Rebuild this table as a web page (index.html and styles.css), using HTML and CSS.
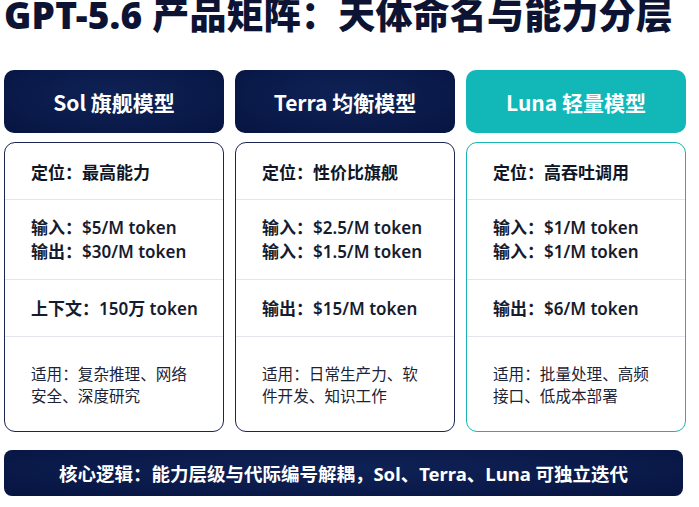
FILE: index.html
```html
<!DOCTYPE html>
<html lang="zh">
<head>
<meta charset="utf-8">
<link rel="stylesheet" href="styles.css">
</head>
<body>
<div class="page">
  <h1 class="title">GPT-5.6 产品矩阵：天体命名与能力分层</h1>
  <div class="grid">
    <div class="col">
      <div class="head navy">Sol 旗舰模型</div>
      <div class="card navy-border">
        <div class="row r1 strong">定位：最高能力</div>
        <div class="row r2 price">输入：$5/M token<br>输出：$30/M token</div>
        <div class="row r3 price">上下文：150万 token</div>
        <div class="row r4 use">适用：复杂推理、网络<br>安全、深度研究</div>
      </div>
    </div>
    <div class="col">
      <div class="head navy">Terra 均衡模型</div>
      <div class="card navy-border">
        <div class="row r1 strong">定位：性价比旗舰</div>
        <div class="row r2 price">输入：$2.5/M token<br>输入：$1.5/M token</div>
        <div class="row r3 price">输出：$15/M token</div>
        <div class="row r4 use">适用：日常生产力、软<br>件开发、知识工作</div>
      </div>
    </div>
    <div class="col">
      <div class="head teal">Luna 轻量模型</div>
      <div class="card teal-border">
        <div class="row r1 strong">定位：高吞吐调用</div>
        <div class="row r2 price">输入：$1/M token<br>输入：$1/M token</div>
        <div class="row r3 price">输出：$6/M token</div>
        <div class="row r4 use">适用：批量处理、高频<br>接口、低成本部署</div>
      </div>
    </div>
  </div>
  <div class="footer">核心逻辑：能力层级与代际编号解耦，Sol、Terra、Luna 可独立迭代</div>
</div>
</body>
</html>
```

FILE: styles.css
```css
html, body {
  margin: 0;
  padding: 0;
  background: #ffffff;
}
body {
  font-family: "Noto Sans", "Noto Sans CJK SC", sans-serif;
  color: #151b30;
  width: 699px;
  height: 507px;
  overflow: hidden;
}
.page {
  padding: 0 11px 0 4px;
}
.title {
  margin: -10px 0 0 0;
  font-size: 37px;
  line-height: 49px;
  font-weight: 900;
  color: #0d1433;
  letter-spacing: 0.2px;
  white-space: nowrap;
}
.grid {
  margin-top: 31px;
  display: grid;
  grid-template-columns: 220px 220px 220px;
  column-gap: 11px;
}
.col {
  display: flex;
  flex-direction: column;
  gap: 9px;
}
.head {
  height: 63px;
  border-radius: 10px;
  display: flex;
  align-items: center;
  justify-content: center;
  color: #ffffff;
  font-size: 21px;
  font-weight: 700;
  font-family: "Noto Sans CJK SC", sans-serif;
}
.navy {
  background: radial-gradient(ellipse at 50% 40%, #0f2255 0%, #0a1a4a 60%, #061440 100%);
}
.teal {
  background: #12b7b8;
}
.card {
  height: 290px;
  box-sizing: border-box;
  border-radius: 11px;
  background: #ffffff;
  display: flex;
  flex-direction: column;
  overflow: hidden;
}
.navy-border {
  border: 1.5px solid #1c2552;
}
.teal-border {
  border: 1.5px solid #18b3b3;
}
.row {
  padding-left: 26px;
  display: flex;
  flex-direction: column;
  justify-content: center;
  box-sizing: border-box;
}
.r1 { height: 57px; border-bottom: 1px solid #e3e6ee; }
.r2 { height: 80px; border-bottom: 1px solid #e3e6ee; }
.r3 { height: 57px; border-bottom: 1px solid #e3e6ee; }
.r4 { flex: 1; padding-bottom: 6px; }
.strong {
  font-family: "Noto Sans CJK SC", sans-serif;
  font-size: 17px;
  font-weight: 700;
  color: #111627;
  padding-top: 1px;
}
.price {
  display: block;
  padding-top: 16px;
  font-size: 17px;
  line-height: 24px;
  font-weight: 600;
  color: #161c30;
}
.r3.price {
  padding-top: 17px;
}
.use {
  display: block;
  padding-top: 25px;
  font-family: "Noto Sans CJK SC", sans-serif;
  font-size: 15.6px;
  line-height: 22px;
  font-weight: 400;
  color: #1d2336;
}
.footer {
  margin-top: 18px;
  width: 679px;
  height: 46px;
  border-radius: 8px;
  background: radial-gradient(ellipse at 50% 40%, #0f2255 0%, #0a1a4a 60%, #061440 100%);
  color: #ffffff;
  display: flex;
  align-items: center;
  justify-content: center;
  font-size: 18.5px;
  font-weight: 700;
  font-family: "Noto Sans", "Noto Sans CJK SC", sans-serif;
}
```
